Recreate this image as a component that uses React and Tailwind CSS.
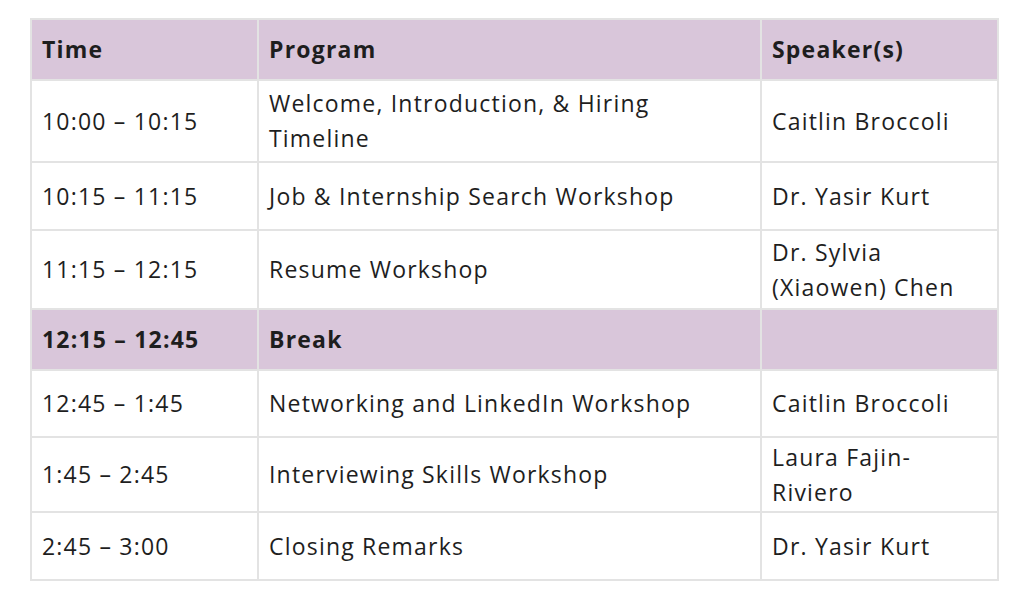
import React from "react";

const rows = [
  { time: "10:00 – 10:15", program: ["Welcome, Introduction, & Hiring", "Timeline"], speaker: ["Caitlin Broccoli"], h: "h-[82px]" },
  { time: "10:15 – 11:15", program: ["Job & Internship Search Workshop"], speaker: ["Dr. Yasir Kurt"], h: "h-[68px]" },
  { time: "11:15 – 12:15", program: ["Resume Workshop"], speaker: ["Dr. Sylvia", "(Xiaowen) Chen"], h: "h-[79px]" },
  { time: "12:15 – 12:45", program: ["Break"], speaker: [], h: "h-[61px]", brk: true },
  { time: "12:45 – 1:45", program: ["Networking and LinkedIn Workshop"], speaker: ["Caitlin Broccoli"], h: "h-[67px]" },
  { time: "1:45 – 2:45", program: ["Interviewing Skills Workshop"], speaker: ["Laura Fajin-", "Riviero"], h: "h-[75px]" },
  { time: "2:45 – 3:00", program: ["Closing Remarks"], speaker: ["Dr. Yasir Kurt"], h: "h-[68px]" },
];

const Lines = ({ items }) =>
  items.map((t, i) => (
    <span key={i} className="block whitespace-nowrap">
      {t}
    </span>
  ));

export default function App() {
  const cell = "border-2 border-[#e3e3e3] px-[10px] align-middle";
  return (
    <div className="min-h-screen w-full bg-white pt-[18px] pl-[30px] font-['Open_Sans',sans-serif] text-[#1e1e1e]">
      <table className="w-[967px] table-fixed border-collapse text-[23px] leading-[35px] tracking-[1.2px]">
        <colgroup>
          <col className="w-[227px]" />
          <col className="w-[503px]" />
          <col className="w-[237px]" />
        </colgroup>
        <thead>
          <tr className="h-[61px] bg-[#d9c6da] font-bold">
            <th className={`${cell} text-left`}>Time</th>
            <th className={`${cell} text-left`}>Program</th>
            <th className={`${cell} text-left`}>Speaker(s)</th>
          </tr>
        </thead>
        <tbody>
          {rows.map((r, i) => (
            <tr key={i} className={`${r.h} ${r.brk ? "bg-[#d9c6da] font-bold" : ""}`}>
              <td className={cell}>{r.time}</td>
              <td className={cell}>
                <Lines items={r.program} />
              </td>
              <td className={cell}>
                <Lines items={r.speaker} />
              </td>
            </tr>
          ))}
        </tbody>
      </table>
    </div>
  );
}
